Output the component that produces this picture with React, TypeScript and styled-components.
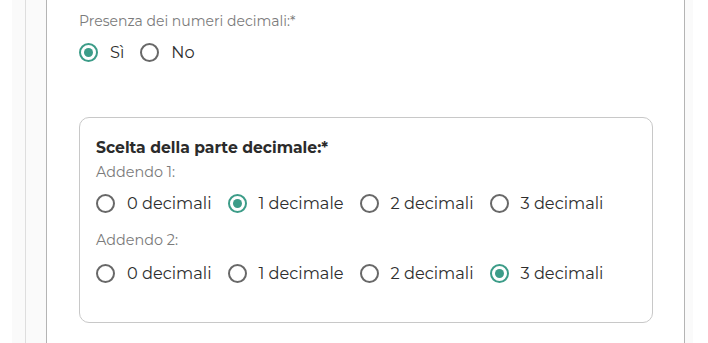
import React from 'react';
import styled, { createGlobalStyle } from 'styled-components';

const GlobalStyle = createGlobalStyle`
  html, body {
    margin: 0;
    padding: 0;
    background: #ffffff;
  }
  body {
    font-family: 'Montserrat', 'Noto Sans', 'Liberation Sans', sans-serif;
    color: #333333;
  }
`;

const Page = styled.div`
  display: flex;
  height: 343px;
  margin-left: 12px;
  width: 681px;
  background: #fafafa;
  padding-left: 13px;
  box-sizing: border-box;
`;

const Shell = styled.div`
  flex: 1;
  display: flex;
  border-left: 1px solid #dedede;
  padding-left: 20px;
  padding-right: 8px;
`;

const Panel = styled.div`
  flex: 1;
  background: #ffffff;
  border-left: 1px solid #b4b4b4;
  border-right: 1px solid #b4b4b4;
  padding: 11px 31px 0 32px;
`;

const FieldLabel = styled.div<{ $strong?: boolean }>`
  font-size: ${({ $strong }) => ($strong ? '15.6px' : '14px')};
  font-weight: ${({ $strong }) => ($strong ? 700 : 400)};
  color: ${({ $strong }) => ($strong ? '#2b2b2b' : '#7b7b7b')};
  line-height: 20px;
`;

const RadioRow = styled.div<{ $gap: number; $top: number }>`
  display: flex;
  align-items: center;
  gap: ${({ $gap }) => $gap}px;
  height: 24px;
  margin-top: ${({ $top }) => $top}px;
`;

const Option = styled.label`
  display: flex;
  align-items: center;
  gap: 12px;
  font-size: 16.2px;
  color: #2e2e2e;
  line-height: 20px;
`;

const Circle = styled.span<{ $on: boolean }>`
  box-sizing: border-box;
  width: 19px;
  height: 19px;
  border-radius: 50%;
  border: 2px solid ${({ $on }) => ($on ? '#3c9c88' : '#686868')};
  display: flex;
  align-items: center;
  justify-content: center;
  &::after {
    content: '';
    width: 9px;
    height: 9px;
    border-radius: 50%;
    background: ${({ $on }) => ($on ? '#3c9c88' : 'transparent')};
  }
`;

const Box = styled.div`
  margin-top: 53px;
  border: 1px solid #c8c8c8;
  border-radius: 10px;
  padding: 20px 16px 37px 16px;
`;

const SubLabel = styled(FieldLabel)<{ $top: number }>`
  font-size: 14.4px;
  margin-top: ${({ $top }) => $top}px;
`;

type RadioProps = { label: string; checked?: boolean };

const Radio = ({ label, checked = false }: RadioProps) => (
  <Option>
    <Circle $on={checked} />
    {label}
  </Option>
);

const choices = ['0 decimali', '1 decimale', '2 decimali', '3 decimali'];

export default function App() {
  return (
    <>
      <GlobalStyle />
      <Page>
        <Shell>
          <Panel>
            <FieldLabel>Presenza dei numeri decimali:*</FieldLabel>
            <RadioRow $gap={16} $top={9}>
              <Radio label="Sì" checked />
              <Radio label="No" />
            </RadioRow>
            <Box>
              <FieldLabel $strong>Scelta della parte decimale:*</FieldLabel>
              <SubLabel $top={4}>Addendo 1:</SubLabel>
              <RadioRow $gap={16} $top={9}>
                {choices.map((c, i) => (
                  <Radio key={c} label={c} checked={i === 1} />
                ))}
              </RadioRow>
              <SubLabel $top={15}>Addendo 2:</SubLabel>
              <RadioRow $gap={16} $top={11}>
                {choices.map((c, i) => (
                  <Radio key={c} label={c} checked={i === 3} />
                ))}
              </RadioRow>
            </Box>
          </Panel>
        </Shell>
      </Page>
    </>
  );
}
